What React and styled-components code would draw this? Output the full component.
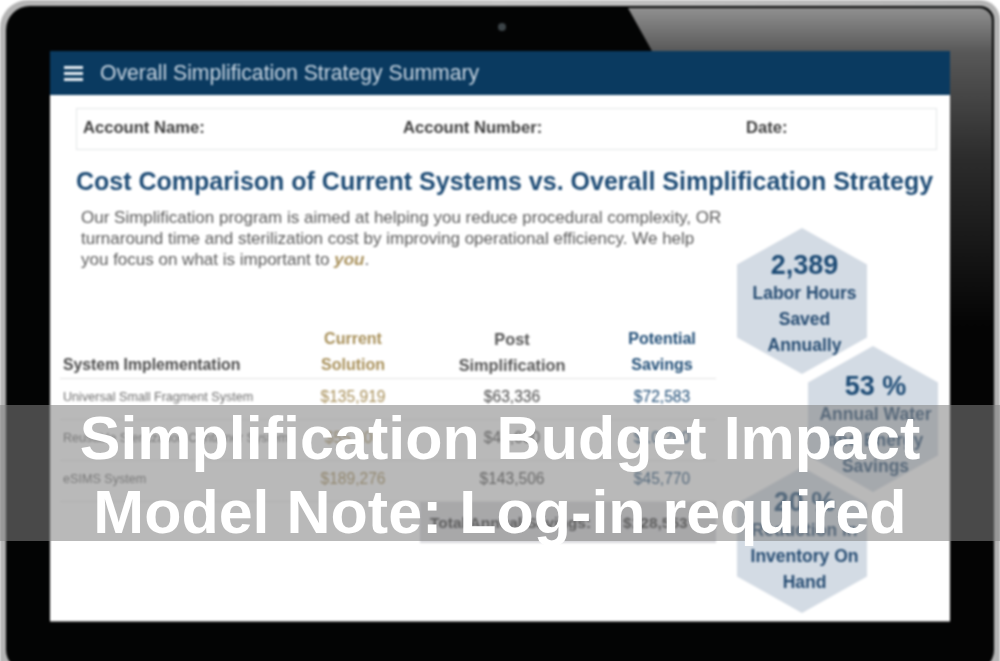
import styled, { createGlobalStyle } from "styled-components";

const GlobalStyle = createGlobalStyle`
  html, body {
    margin: 0;
    background: #fff;
  }
  body {
    font-family: "Liberation Sans", Arial, sans-serif;
  }
`;

const Page = styled.div`
  position: relative;
  width: 1000px;
  height: 661px;
  overflow: hidden;
  background: #fff;
`;

// grey rim of the tablet
const Frame = styled.div`
  height: 690px;
  box-sizing: border-box;
  padding: 6px 6px 0 6px;
  background: linear-gradient(90deg, #b4b4b4 0, #c4c4c4 50%, #b4b4b4 100%);
  border-radius: 28px 20px 24px 24px;
  filter: blur(1px);
`;

const Tablet = styled.div`
  position: relative;
  height: 664px;
  box-sizing: border-box;
  padding: 45px 44px 0 44px;
  background: #030404;
  border-radius: 24px 14px 20px 20px;
  overflow: hidden;
`;

// reflection on the top right of the bezel
const Glare = styled.div`
  position: absolute;
  inset: 2px 2px 0 0;
  border-radius: 0 13px 0 0;
  background: linear-gradient(180deg, #909090 0, #585858 44px, #2c2c2c 150px, #040404 320px);
  clip-path: polygon(622px 0, 100% 0, 100% 100%, 944px 100%, 944px 43px, 646px 43px);
`;

const Camera = styled.div`
  position: absolute;
  top: 17px;
  left: 492px;
  width: 8px;
  height: 8px;
  border-radius: 50%;
  background: #3c4448;
`;

const Screen = styled.div`
  position: relative;
  width: 900px;
  height: 570px;
  background: #fff;
  border-bottom: 1px solid #777;
  box-sizing: content-box;
  overflow: hidden;
`;

const Header = styled.header`
  display: flex;
  align-items: center;
  gap: 17px;
  height: 44px;
  padding-left: 14px;
  background: #0a3a60;
  color: #c9d6e2;
  font-size: 21.2px;
`;

const Burger = styled.div`
  display: flex;
  flex-direction: column;
  gap: 3px;
  width: 19px;
  span {
    height: 3px;
    background: #e6edf3;
  }
`;

const InfoBox = styled.div`
  display: grid;
  grid-template-columns: 320px 343px 1fr;
  align-items: center;
  height: 42px;
  box-sizing: border-box;
  margin: 13px 13px 0 26px;
  padding: 0 0 3px 6px;
  border: 1px solid #e4e6e8;
  font-size: 16.6px;
  font-weight: bold;
  color: #3e3e3e;
`;

const Title = styled.h1`
  margin: 15px 0 0 26px;
  font-size: 25px;
  line-height: 32px;
  font-weight: bold;
  color: #1d4b75;
  white-space: nowrap;
`;

const Columns = styled.div`
  display: flex;
  padding-left: 10px;
`;

const Left = styled.div`
  width: 656px;
  flex: none;
`;

const Intro = styled.p`
  width: 650px;
  margin: 10px 0 0 21px;
  font-size: 17px;
  line-height: 21px;
  color: #5a5a5a;
  white-space: nowrap;
  em {
    color: #a8905a;
    font-weight: bold;
  }
`;

const Row = styled.div`
  display: grid;
  grid-template-columns: 230px 126px 192px 108px;
  align-items: center;
  text-align: center;
  height: 41px;
  box-sizing: border-box;
  padding-bottom: 4px;
  border-bottom: 1px solid #ececec;
`;

const HeadRow = styled(Row)`
  align-items: end;
  height: auto;
  margin-top: 56px;
  padding-bottom: 0;
  border-bottom-color: #e2e2e2;
  font-size: 16px;
  line-height: 26px;
  font-weight: bold;
`;

const Cell = styled.div`
  color: ${(p) => (p.$tone === "gold" ? "#a8905a" : p.$tone === "blue" ? "#1d4b75" : "#4a4a4a")};
`;

const HeadName = styled(Cell)`
  text-align: left;
  padding-left: 3px;
  font-size: 15.8px;
`;

const PostHead = styled(Cell)`
  font-size: 16.3px;
  color: #555;
`;

const Value = styled(Cell)`
  font-size: 15.6px;
`;

const SystemName = styled.div`
  text-align: left;
  padding-left: 3px;
  font-size: 12.6px;
  color: #6e6e6e;
  white-space: nowrap;
`;

const Total = styled.div`
  display: flex;
  align-items: center;
  gap: 32px;
  height: 41px;
  box-sizing: border-box;
  margin-left: 360px;
  padding-left: 10px;
  background: #d8d8dc;
  font-size: 15.5px;
  font-weight: bold;
  color: #333;
  white-space: nowrap;
`;

const HexColumn = styled.div`
  display: flex;
  flex-direction: column;
  align-items: flex-start;
  padding: 31px 0 0 21px;
`;

const Hex = styled.div`
  width: 130px;
  height: 146px;
  flex: none;
  box-sizing: border-box;
  padding: ${(p) => p.$pad || 22}px 0 0 5px;
  margin-left: ${(p) => (p.$shift ? "71px" : "0")};
  margin-top: ${(p) => p.$lift || 0}px;
  clip-path: polygon(50% 0, 100% 25%, 100% 75%, 50% 100%, 0 75%, 0 25%);
  background: #d3dbe4;
  text-align: center;
  color: #1d4b75;
  overflow: hidden;
`;

const HexNumber = styled.div`
  font-size: 27px;
  line-height: 30px;
  font-weight: bold;
`;

const HexLabel = styled.div`
  font-size: 17.5px;
  line-height: 26px;
  font-weight: bold;
  color: #264c72;
  white-space: nowrap;
`;

const Banner = styled.div`
  position: absolute;
  top: 405px;
  left: 0;
  right: 0;
  height: 136px;
  box-sizing: border-box;
  display: flex;
  align-items: center;
  justify-content: center;
  padding-top: 4px;
  background: rgba(129, 129, 129, 0.557);
  text-align: center;
  color: #fff;
  font-size: 61px;
  line-height: 74px;
  font-weight: bold;
`;

const rows = [
  ["Universal Small Fragment System", "$135,919", "$63,336", "$72,583"],
  ["Reusable Sterilization Container System", "$55,200", "$45,000", "$10,200"],
  ["eSIMS System", "$189,276", "$143,506", "$45,770"],
];

function App() {
  return (
    <Page>
      <GlobalStyle />
      <Frame>
        <Tablet>
          <Glare />
          <Camera />
          <Screen>
            <Header>
              <Burger>
                <span />
                <span />
                <span />
              </Burger>
              Overall Simplification Strategy Summary
            </Header>
            <InfoBox>
              <div>Account Name:</div>
              <div>Account Number:</div>
              <div>Date:</div>
            </InfoBox>
            <Title>Cost Comparison of Current Systems vs. Overall Simplification Strategy</Title>
            <Columns>
              <Left>
                <Intro>
                  Our Simplification program is aimed at helping you reduce procedural complexity, OR
                  <br />
                  turnaround time and sterilization cost by improving operational efficiency. We help
                  <br />
                  you focus on what is important to <em>you</em>.
                </Intro>
                <HeadRow>
                  <HeadName>System Implementation</HeadName>
                  <Cell $tone="gold">
                    Current
                    <br />
                    Solution
                  </Cell>
                  <PostHead>
                    Post
                    <br />
                    Simplification
                  </PostHead>
                  <Cell $tone="blue">
                    Potential
                    <br />
                    Savings
                  </Cell>
                </HeadRow>
                {rows.map((r) => (
                  <Row key={r[0]}>
                    <SystemName>{r[0]}</SystemName>
                    <Value $tone="gold">{r[1]}</Value>
                    <Value>{r[2]}</Value>
                    <Value $tone="blue">{r[3]}</Value>
                  </Row>
                ))}
                <Total>
                  <span>Total Annual Savings:</span>
                  <span>$128,553</span>
                </Total>
              </Left>
              <HexColumn>
                <Hex>
                  <HexNumber>2,389</HexNumber>
                  <HexLabel>
                    Labor Hours
                    <br />
                    Saved
                    <br />
                    Annually
                  </HexLabel>
                </Hex>
                <Hex $shift $lift={-28} $pad={25}>
                  <HexNumber>53 %</HexNumber>
                  <HexLabel>
                    Annual Water
                    <br />
                    and Energy
                    <br />
                    Savings
                  </HexLabel>
                </Hex>
                <Hex $lift={-25} $pad={20}>
                  <HexNumber>20 %</HexNumber>
                  <HexLabel>
                    Reduction in
                    <br />
                    Inventory On
                    <br />
                    Hand
                  </HexLabel>
                </Hex>
              </HexColumn>
            </Columns>
          </Screen>
        </Tablet>
      </Frame>
      <Banner>
        <div>
          Simplification Budget Impact
          <br />
          Model Note: Log-in required
        </div>
      </Banner>
    </Page>
  );
}

export default App;
